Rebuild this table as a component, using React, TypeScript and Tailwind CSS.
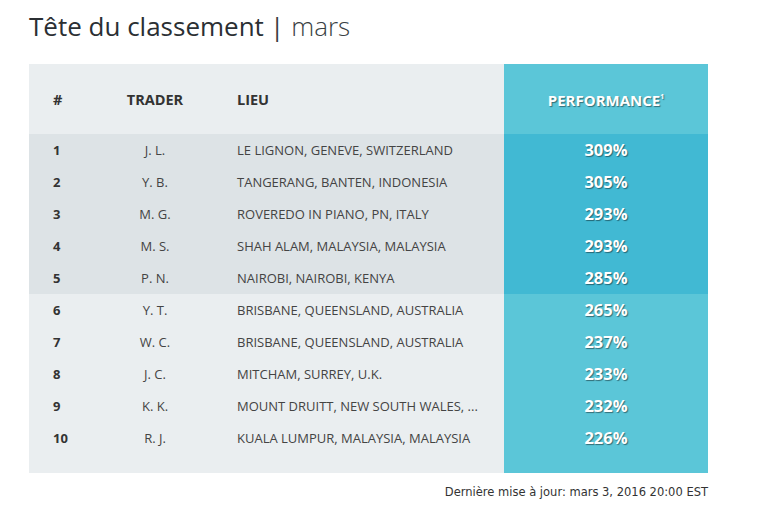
const rows = [
  { rank: 1, trader: 'J. L.', lieu: 'LE LIGNON, GENEVE, SWITZERLAND', perf: '309%' },
  { rank: 2, trader: 'Y. B.', lieu: 'TANGERANG, BANTEN, INDONESIA', perf: '305%' },
  { rank: 3, trader: 'M. G.', lieu: 'ROVEREDO IN PIANO, PN, ITALY', perf: '293%' },
  { rank: 4, trader: 'M. S.', lieu: 'SHAH ALAM, MALAYSIA, MALAYSIA', perf: '293%' },
  { rank: 5, trader: 'P. N.', lieu: 'NAIROBI, NAIROBI, KENYA', perf: '285%' },
  { rank: 6, trader: 'Y. T.', lieu: 'BRISBANE, QUEENSLAND, AUSTRALIA', perf: '265%' },
  { rank: 7, trader: 'W. C.', lieu: 'BRISBANE, QUEENSLAND, AUSTRALIA', perf: '237%' },
  { rank: 8, trader: 'J. C.', lieu: 'MITCHAM, SURREY, U.K.', perf: '233%' },
  { rank: 9, trader: 'K. K.', lieu: 'MOUNT DRUITT, NEW SOUTH WALES, ...', perf: '232%' },
  { rank: 10, trader: 'R. J.', lieu: 'KUALA LUMPUR, MALAYSIA, MALAYSIA', perf: '226%' },
];

const shadow = '[text-shadow:1px_1px_1px_rgba(0,0,0,0.45)]';

function Row({ r, top }: { r: (typeof rows)[number]; top: boolean }) {
  return (
    <div className="flex h-[32px]">
      <div className={`flex w-[475px] items-center pt-[2px] text-[13px] text-[#444] ${top ? 'bg-[#dde3e6]' : 'bg-[#eaeef0]'}`}>
        <div className="w-[60px] pl-[24px] font-bold text-[#333]">{r.rank}</div>
        <div className="w-[132px] text-center">{r.trader}</div>
        <div className="pl-[16px]">{r.lieu}</div>
      </div>
      <div
        className={`flex w-[204px] items-center justify-center text-[16.5px] font-bold text-white ${shadow} ${top ? 'bg-[#41b9d3]' : 'bg-[#5bc6d8]'}`}
      >
        {r.perf}
      </div>
    </div>
  );
}

export default function App() {
  return (
    <div className="min-h-[510px] w-[769px] bg-white pl-[29px] font-['Open_Sans',sans-serif]">
      <h1 className="pt-[8px] text-[26px] leading-[36px] text-[#2b2f33]">
        Tête du classement<span className="ml-[6px] text-[#3a3f44]">|</span>
        <span className="ml-[7px] font-light text-[#3a3f44]">mars</span>
      </h1>

      <div className="mt-[20px] w-[679px]">
        <div className="flex h-[70px]">
          <div className="flex w-[475px] items-center bg-[#eaeef0] pt-[2px] text-[14.5px] font-bold text-[#333]">
            <div className="w-[60px] pl-[24px]">#</div>
            <div className="w-[132px] text-center">TRADER</div>
            <div className="pl-[16px]">LIEU</div>
          </div>
          <div className={`flex w-[204px] items-center justify-center bg-[#5bc6d8] pt-[2px] text-[15px] font-bold text-white ${shadow}`}>
            PERFORMANCE<sup className="text-[7px]">1</sup>
          </div>
        </div>

        {rows.map((r) => (
          <Row key={r.rank} r={r} top={r.rank <= 5} />
        ))}

        <div className="flex h-[19px]">
          <div className="w-[475px] bg-[#eaeef0]" />
          <div className="w-[204px] bg-[#5bc6d8]" />
        </div>

        <p className="mt-[11px] text-right font-['DejaVu_Sans',sans-serif] text-[11.5px] leading-[16px] text-[#333]">
          Dernière mise à jour: mars 3, 2016 20:00 EST
        </p>
      </div>
    </div>
  );
}
